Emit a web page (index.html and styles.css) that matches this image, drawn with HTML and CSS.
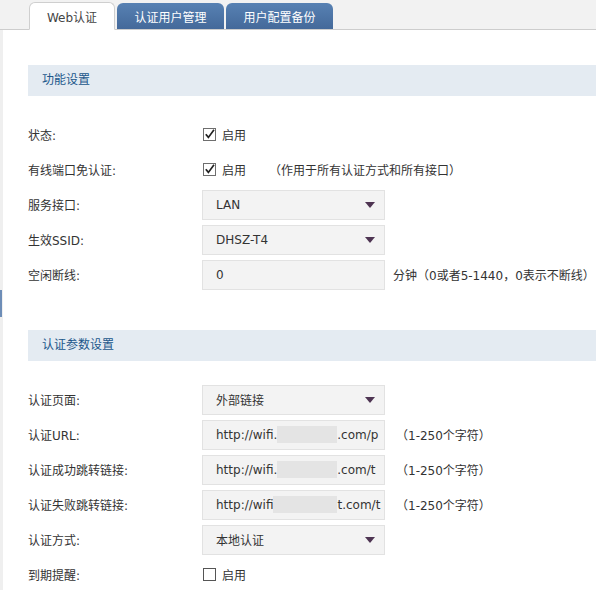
FILE: index.html
```html
<!DOCTYPE html>
<html lang="zh-CN">
<head>
<meta charset="utf-8">
<title>Web认证</title>
<link rel="stylesheet" href="styles.css">
</head>
<body>
<div class="tabbar">
  <div class="tab active">Web认证</div>
  <div class="tab">认证用户管理</div>
  <div class="tab">用户配置备份</div>
</div>
<div class="main">
  <div class="sidebar"><div class="marker"></div></div>
  <div class="content">
    <div class="section-head">功能设置</div>
    <div class="rows">
      <div class="row">
        <div class="label">状态:</div>
        <div class="check">
          <svg class="cb" width="13" height="13" viewBox="0 0 13 13"><rect x="0.5" y="0.5" width="12" height="12" fill="#fff" stroke="#6e6e6e"/><path d="M2.8 6.2 L5.4 9.4 L11 1.8" fill="none" stroke="#222" stroke-width="1.7"/></svg>
          <span>启用</span>
        </div>
      </div>
      <div class="row">
        <div class="label">有线端口免认证:</div>
        <div class="check">
          <svg class="cb" width="13" height="13" viewBox="0 0 13 13"><rect x="0.5" y="0.5" width="12" height="12" fill="#fff" stroke="#6e6e6e"/><path d="M2.8 6.2 L5.4 9.4 L11 1.8" fill="none" stroke="#222" stroke-width="1.7"/></svg>
          <span>启用</span>
        </div>
        <div class="hint wide">（作用于所有认证方式和所有接口）</div>
      </div>
      <div class="row">
        <div class="label">服务接口:</div>
        <div class="select"><span>LAN</span><i class="arrow"></i></div>
      </div>
      <div class="row">
        <div class="label">生效SSID:</div>
        <div class="select"><span>DHSZ-T4</span><i class="arrow"></i></div>
      </div>
      <div class="row">
        <div class="label">空闲断线:</div>
        <div class="input">0</div>
        <div class="hint">分钟（0或者5-1440，0表示不断线）</div>
      </div>
    </div>

    <div class="section-head second">认证参数设置</div>
    <div class="rows">
      <div class="row">
        <div class="label">认证页面:</div>
        <div class="select"><span>外部链接</span><i class="arrow"></i></div>
      </div>
      <div class="row">
        <div class="label">认证URL:</div>
        <div class="input">http://wifi.<span class="blur"></span>.com/p</div>
        <div class="hint paren">（1-250个字符）</div>
      </div>
      <div class="row">
        <div class="label">认证成功跳转链接:</div>
        <div class="input">http://wifi.<span class="blur"></span>.com/t</div>
        <div class="hint paren">（1-250个字符）</div>
      </div>
      <div class="row">
        <div class="label">认证失败跳转链接:</div>
        <div class="input">http://wifi<span class="blur b3"></span>t.com/t</div>
        <div class="hint paren">（1-250个字符）</div>
      </div>
      <div class="row">
        <div class="label">认证方式:</div>
        <div class="select"><span>本地认证</span><i class="arrow"></i></div>
      </div>
      <div class="row">
        <div class="label">到期提醒:</div>
        <div class="check">
          <svg class="cb" width="13" height="13" viewBox="0 0 13 13"><rect x="0.5" y="0.5" width="12" height="12" fill="#fff" stroke="#555"/></svg>
          <span>启用</span>
        </div>
      </div>
    </div>
  </div>
</div>
</body>
</html>
```

FILE: styles.css
```css
* { box-sizing: border-box; }
html, body { margin: 0; padding: 0; background: #fff; }
body {
  font-family: "DejaVu Sans", "Noto Sans CJK SC", sans-serif;
  font-size: 12px;
  color: #333;
  width: 596px;
  height: 590px;
  overflow: hidden;
}
.tabbar {
  height: 30px;
  background: #f2f2f2;
  border-bottom: 1px solid #cdcdcd;
  display: flex;
  align-items: flex-end;
  gap: 2px;
  padding-left: 29px;
}
.tab {
  width: 107px;
  height: 27px;
  margin-bottom: -1px;
  display: flex;
  align-items: center;
  justify-content: center;
  color: #fff;
  font-size: 12px;
  border-radius: 6px 6px 0 0;
  background: linear-gradient(#5781b3, #44699a);
  border-bottom: 1px solid #cdcdcd;
}
.tab.active {
  width: 86px;
  height: 28px;
  background: #fff;
  color: #444;
  border: 1px solid #cfcfcf;
  border-bottom: 1px solid #fff;
}
.main {
  display: flex;
  height: 560px;
}
.sidebar {
  width: 3px;
  background: #efefef;
  flex: none;
}
.marker {
  margin-top: 260px;
  height: 27px;
  width: 2px;
  background: #6d8db7;
}
.content {
  flex: 1;
  padding-left: 25px;
  padding-top: 35px;
}
.section-head {
  height: 31px;
  line-height: 31px;
  background: #e4ebf2;
  color: #21578b;
  padding-left: 14px;
}
.section-head.second { margin-top: 38px; }
.rows { margin-top: 21px; }
.row {
  height: 35px;
  display: flex;
  align-items: center;
}
.label {
  width: 174px;
  flex: none;
}
.check {
  display: flex;
  align-items: center;
  gap: 6px;
  padding-left: 1px;
}
.cb { display: block; }
.hint { margin-left: 8px; white-space: nowrap; }
.hint.wide { margin-left: 23px; }
.hint.paren { margin-left: 11px; }
.select, .input {
  width: 183px;
  height: 30px;
  border: 1px solid #e2e2e2;
  background: #f3f3f3;
  padding: 0 4px 0 13px;
  display: flex;
  align-items: center;
  white-space: nowrap;
  overflow: hidden;
  flex: none;
}
.select span { flex: 1; }
.arrow {
  width: 0;
  height: 0;
  border-left: 5px solid transparent;
  border-right: 5px solid transparent;
  border-top: 6px solid #4e3452;
  margin-right: 5px;
}
.blur {
  display: inline-block;
  width: 60px;
  height: 17px;
  background: #e4e4e4;
  flex: none;
}
.blur.b3 { width: 64px; }
```
